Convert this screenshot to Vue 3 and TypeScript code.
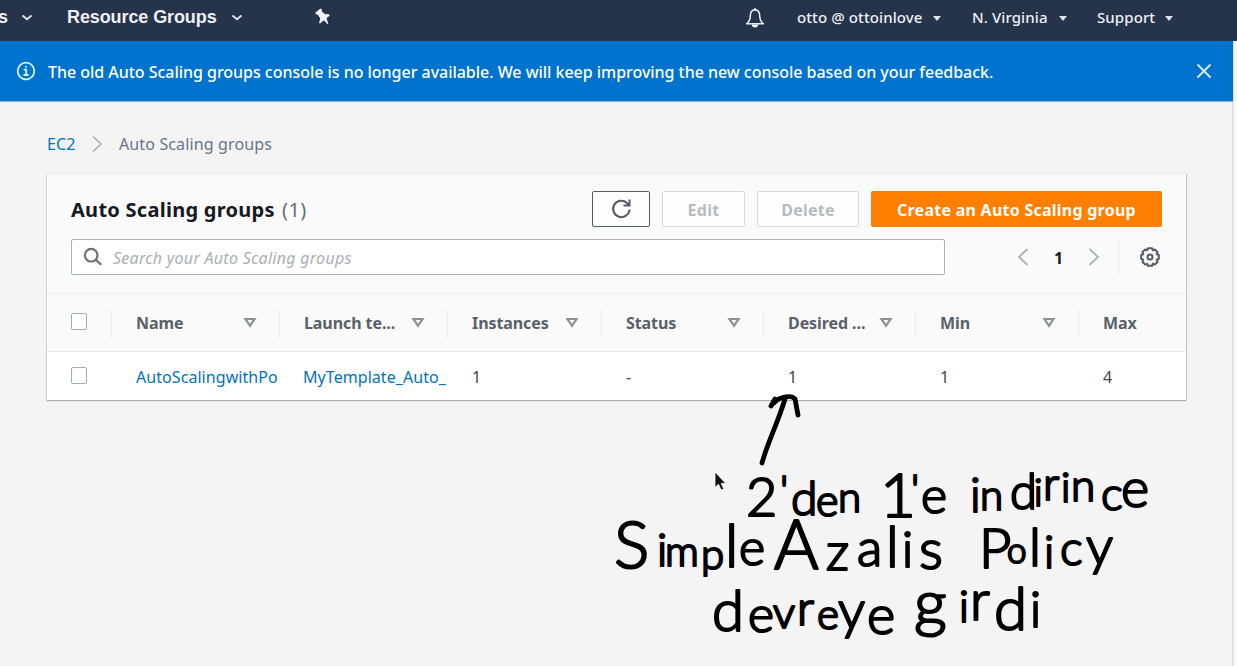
<script setup lang="ts">
interface Column {
  label: string
  value: string
  link?: boolean
  sortable: boolean
}

/** character, left edge, baseline, font size */
type Glyph = [string, number, number, number]

const columns: Column[] = [
  { label: 'Name', value: 'AutoScalingwithPolicy', link: true, sortable: true },
  { label: 'Launch te...', value: 'MyTemplate_Auto_Scaling', link: true, sortable: true },
  { label: 'Instances', value: '1', sortable: true },
  { label: 'Status', value: '-', sortable: true },
  { label: 'Desired ...', value: '1', sortable: true },
  { label: 'Min', value: '1', sortable: true },
  { label: 'Max', value: '4', sortable: false },
]

const words: Glyph[][] = [
  [['2', 746, 516, 54], ["'", 780, 505, 42], ['d', 791, 515, 48], ['e', 816, 516, 43], ['n', 838, 512, 42]],
  [['1', 880, 517, 62], ["'", 911, 504, 42], ['e', 921, 513, 50]],
  [['i', 970, 512, 48], ['n', 980, 510, 42]],
  [['d', 1010, 509, 49], ['i', 1034, 506, 38], ['r', 1043, 500, 46], ['i', 1061, 502, 42], ['n', 1071, 501, 44], ['c', 1101, 510, 46], ['e', 1121, 507, 54]],
  [['S', 614, 568, 66], ['i', 657, 566, 46], ['m', 665, 566, 42], ['p', 701, 569, 42], ['l', 725, 567, 60], ['e', 739, 565, 50]],
  [['A', 774, 569, 68], ['z', 826, 570, 52], ['a', 857, 566, 52], ['l', 886, 567, 58], ['i', 902, 567, 50], ['s', 919, 569, 56]],
  [['P', 979, 568, 56], ['o', 1007, 563, 35], ['l', 1029, 566, 54], ['i', 1044, 568, 46], ['c', 1060, 565, 48], ['y', 1086, 565, 54]],
  [['d', 712, 631, 58], ['e', 748, 632, 50], ['v', 773, 628, 44], ['r', 797, 625, 48], ['e', 817, 629, 42], ['y', 838, 629, 54], ['e', 867, 634, 54]],
  [['g', 914, 625, 64], ['i', 959, 622, 44], ['r', 970, 620, 56], ['d', 994, 630, 60], ['i', 1030, 627, 50]],
]
</script>

<template>
  <div class="page">
    <header class="nav">
      <span class="nav-main nav-cut">s</span>
      <svg class="chev chev-a" width="12" height="8" viewBox="0 0 12 8"><path d="M1.500 1.500 6 5.200l4.500-3.700" /></svg>
      <span class="nav-main groups">Resource Groups</span>
      <svg class="chev chev-b" width="12" height="8" viewBox="0 0 12 8"><path d="M1.500 1.500 6 5.200l4.500-3.700" /></svg>
      <svg class="pin" width="18" height="18" viewBox="0 0 18 18">
        <path d="M1.500 4.500 6.500.5l1.500 1-.2 2 3.400 2.700 3.500-.2 1 1.700-3.200 2.300 1.800 5.700-1 .3-3.400-3.800-3.900 3.300-.9-.8 1.200-4.100L3.600 6.400l-1.800.2z" />
      </svg>
      <span class="spacer"></span>
      <svg class="bell" width="20" height="22" viewBox="0 0 20 22">
        <path d="M10 2.800C7 3 5.300 5.500 5.300 9c0 4-1.300 5.800-3.600 7.700h16.600c-2.300-1.900-3.600-3.700-3.600-7.700 0-3.500-1.700-6-4.700-6.200z" />
        <path class="clapper" d="M6.800 17.500a3.200 3 0 0 0 6.400 0zM9 1.200h2v2H9z" />
      </svg>
      <span class="nav-item account">otto @ ottoinlove</span>
      <i class="caret"></i>
      <span class="nav-item region">N. Virginia</span>
      <i class="caret"></i>
      <span class="nav-item support">Support</span>
      <i class="caret"></i>
    </header>

    <div class="banner">
      <svg width="20" height="20" viewBox="0 0 20 20" class="info">
        <circle cx="10" cy="10" r="8.300" />
        <path d="M7.700 8.700h2.500v5.100M7.500 14h5.200M9 5.700h1.800" />
      </svg>
      <span class="banner-text">The old Auto Scaling groups console is no longer available. We will keep improving the new console based on your feedback.</span>
      <svg class="close" width="16" height="16" viewBox="0 0 16 16"><path d="M1.500 1.500l13 13M14.500 1.500l-13 13" /></svg>
    </div>

    <main>
      <nav class="crumbs">
        <a>EC2</a>
        <svg width="12" height="18" viewBox="0 0 12 18"><path d="M2 1.500 10 9l-8 7.500" /></svg>
        <span>Auto Scaling groups</span>
      </nav>

      <section class="card">
        <div class="title-row">
          <h1>Auto Scaling groups</h1>
          <span class="count">(1)</span>
          <span class="spacer"></span>
          <button class="btn refresh">
            <svg width="22" height="22" viewBox="0 0 22 22"><path d="M19.500 11.500a8.200 8.200 0 1 1-2.600-6.600L19 7M19.500 1.500V7.500H13.500" /></svg>
          </button>
          <button class="btn muted edit">Edit</button>
          <button class="btn muted delete">Delete</button>
          <button class="btn create">Create an Auto Scaling group</button>
        </div>

        <div class="filter-row">
          <div class="search">
            <svg width="20" height="20" viewBox="0 0 20 20"><circle cx="8.200" cy="8.200" r="6.300" /><path d="M12.600 12.600l5.600 5.200" /></svg>
            <span>Search your Auto Scaling groups</span>
          </div>
          <div class="pager">
            <svg width="12" height="20" viewBox="0 0 12 20"><path d="M10.500 2 2 10l8.500 8" /></svg>
            <b>1</b>
            <svg width="12" height="20" viewBox="0 0 12 20"><path d="M1.500 2 10 10l-8.500 8" /></svg>
          </div>
          <div class="settings">
            <svg width="22" height="22" viewBox="0 0 22 22">
              <path d="M9 2.200h4l.8 2 2-.8 2.800 2.800-.8 2 2 .8v4l-2 .8.8 2-2.800 2.800-2-.8-.8 2H9l-.8-2-2 .8-2.800-2.800.8-2-2-.8V9l2-.8-.8-2 2.800-2.800 2 .8z" />
              <circle cx="11" cy="11" r="2.500" />
            </svg>
          </div>
        </div>

        <div class="grid head">
          <div class="cell check"><i class="box"></i></div>
          <div v-for="c in columns" :key="c.label" class="cell">
            <span>{{ c.label }}</span>
            <svg v-if="c.sortable" width="14" height="12" viewBox="0 0 14 12"><path d="M2.500 2h9L7 8.800z" /></svg>
          </div>
        </div>
        <div class="grid row">
          <div class="cell check"><i class="box"></i></div>
          <div v-for="c in columns" :key="c.label" class="cell" :class="{ link: c.link }">
            <span>{{ c.value }}</span>
          </div>
        </div>
      </section>
    </main>

    <svg class="ink" width="1237" height="666" viewBox="0 0 1237 666">
      <path class="arrow" d="M762 463C767 444 777 425 785 399M771 406l4-7M774 403C780 396 792 395 795 399l3 16" />
      <text v-for="(word, i) in words" :key="i"><tspan
        v-for="([char, x, y, size], j) in word"
        :key="j"
        :x="x"
        :y="y"
        :font-size="size"
      >{{ char }}</tspan></text>
      <path class="cursor" d="M715 472v15.500l3.500-3.200 2.600 5.800 2.700-1.200-2.500-5.500h4.500z" />
    </svg>
  </div>
</template>

<style>
body {
  margin: 0;
  overflow: hidden;
}
</style>

<style scoped>
.page {
  position: relative;
  box-sizing: border-box;
  width: 1237px;
  height: 666px;
  overflow: hidden;
  background: linear-gradient(90deg, #f4f4f5 1232px, #e2e3e5 1232px, #e2e3e5 1234px, #fafafa 1234px);
  font-family: 'Noto Sans', 'Open Sans', sans-serif;
  font-size: 16px;
  color: #444;
}
svg {
  fill: none;
  flex: none;
}
.spacer {
  flex: 1;
}
.nav {
  display: flex;
  align-items: center;
  height: 41px;
  padding: 0 64px 7px 0;
  box-sizing: border-box;
  background: #25334b;
  color: #edf0f5;
  white-space: nowrap;
}
.nav-main {
  font: bold 18px/22px 'Liberation Sans', sans-serif;
  letter-spacing: -0.100px;
}
.nav-cut {
  width: 8px;
  margin-left: -2px;
}
.chev {
  margin-top: 2px;
}
.chev path {
  stroke: #dfe3ea;
  stroke-width: 2;
}
.chev-a {
  margin-left: 15px;
}
.groups {
  margin-left: 34px;
  width: 150px;
}
.chev-b {
  margin-left: 14px;
}
.pin {
  margin-left: 71px;
}
.pin path {
  fill: #f1f3f7;
}
.bell {
  margin: 2px 32px 0 0;
}
.bell path {
  stroke: #edf0f5;
  stroke-width: 1.500;
  stroke-linejoin: round;
}
.bell .clapper {
  fill: #edf0f5;
  stroke: none;
}
.nav-item {
  font-size: 15px;
  font-weight: 500;
  letter-spacing: 0.100px;
}
.account {
  width: 127px;
}
.region {
  margin-left: 31px;
  width: 78px;
}
.support {
  margin-left: 30px;
  width: 59px;
}
.caret {
  margin: 2px 0 0 9px;
  border: 4.500px solid transparent;
  border-top: 5px solid #dfe3ea;
  border-bottom: 0;
}
.banner {
  display: flex;
  align-items: center;
  width: 1233px;
  height: 60px;
  padding: 0 21px 0 16px;
  box-sizing: border-box;
  background: #0073ce;
  color: #fff;
  box-shadow: 0 1px 1px #a5b4c8;
}
.info {
  stroke: #d6f1ff;
  stroke-width: 1.800;
}
.banner-text {
  flex: 1;
  margin: 2px 0 0 12px;
  font-weight: 500;
  white-space: nowrap;
  letter-spacing: -0.030px;
}
.close {
  stroke: #d6f1ff;
  stroke-width: 1.800;
}
main {
  padding: 31px 0 0 47px;
}
.crumbs {
  display: flex;
  align-items: center;
  height: 24px;
  color: #687588;
  letter-spacing: 0.130px;
}
.crumbs a {
  width: 29px;
  color: #0073bb;
}
.crumbs svg {
  margin: 0 16px 0 15px;
  stroke: #aab2b8;
  stroke-width: 1.700;
}
.card {
  display: flex;
  flex-direction: column;
  width: 1139px;
  height: 226px;
  margin-top: 18px;
  background: #fafafb;
  box-shadow: 0 1px 1px #aaaeb0, 1px 0 1px #c9cccf, -1px 0 1px #dcdee0;
}
.title-row {
  display: flex;
  align-items: center;
  padding: 17px 24px 0;
}
h1 {
  margin: 1px 0 0;
  width: 204px;
  font-size: 20px;
  line-height: 24px;
  font-weight: 700;
  letter-spacing: 0.270px;
  color: #16191f;
  white-space: nowrap;
}
.count {
  margin: 1px 0 0 7px;
  font-size: 20px;
  line-height: 24px;
  letter-spacing: 0.400px;
  color: #687078;
}
.btn {
  display: flex;
  align-items: center;
  justify-content: center;
  box-sizing: border-box;
  height: 36px;
  margin: 0 0 0 12px;
  padding: 2px 0 0;
  border: 1px solid #d5dbdb;
  border-radius: 2px;
  background: #fefefe;
  font: 700 16px 'Noto Sans', sans-serif;
  letter-spacing: 0.250px;
  white-space: nowrap;
}
.refresh {
  padding: 0;
  width: 58px;
  border-color: #545b64;
}
.refresh svg {
  stroke: #545b64;
  stroke-width: 2;
}
.muted {
  color: #b5bcc0;
}
.edit {
  width: 83px;
}
.delete {
  width: 102px;
}
.create {
  width: 291px;
  border-color: #f77f0a;
  background: #ff8000;
  color: #fff;
}
.filter-row {
  display: flex;
  align-items: center;
  margin: 12px 24px 0;
  height: 36px;
}
.search {
  display: flex;
  align-items: center;
  box-sizing: border-box;
  width: 874px;
  height: 36px;
  padding-left: 11px;
  border: 1px solid #aab7b8;
  border-radius: 2px;
  background: #fff;
  font-style: italic;
  letter-spacing: 0.280px;
  color: #aaafb3;
}
.search svg {
  stroke: #687078;
  stroke-width: 2.200;
}
.search span {
  margin: 2px 0 0 10px;
}
.pager {
  display: flex;
  align-items: center;
  justify-content: space-between;
  width: 83px;
  margin-left: 72px;
  color: #16191f;
}
.pager b {
  margin-top: 2px;
}
.pager svg {
  stroke: #aab2b8;
  stroke-width: 1.800;
}
.settings {
  display: flex;
  align-items: center;
  height: 36px;
  margin-left: 18px;
  padding-left: 20px;
  border-left: 1px solid #eaeded;
}
.settings svg {
  stroke: #545b64;
  stroke-width: 2;
  stroke-linejoin: round;
}
.grid {
  display: grid;
  grid-template-columns: 65px 168px 168px 154px 162px 152px 163px 107px;
  box-sizing: border-box;
}
.head {
  align-items: center;
  height: 59px;
  margin-top: 18px;
  border-top: 1px solid #eeefef;
  border-bottom: 1px solid #e6e8e8;
  font-weight: 700;
  letter-spacing: -0.080px;
  color: #596068;
}
.cell {
  display: flex;
  align-items: center;
  box-sizing: border-box;
  min-width: 0;
  padding-left: 24px;
  white-space: nowrap;
}
.head .cell {
  height: 28px;
  justify-content: space-between;
  padding-right: 22px;
  border-right: 1px solid #eaeded;
}
.head span {
  margin-top: 1px;
}
.head .check {
  padding-right: 0;
}
.head .cell:last-child {
  border: 0;
}
.head svg {
  stroke: #8a9094;
  stroke-width: 2.200;
}
.row {
  flex: 1;
  background: #fff;
}
.row span {
  min-width: 0;
  margin-top: 2px;
  overflow: hidden;
}
.row .link {
  padding-right: 1px;
  color: #0073bb;
  letter-spacing: 0.060px;
}
.row .cell:nth-child(3) {
  padding-left: 23px;
}
.box {
  box-sizing: border-box;
  width: 16px;
  height: 17px;
  margin-top: -2px;
  border: 1px solid #a4adae;
  border-radius: 2px;
  background: #fff;
}
.ink {
  position: absolute;
  inset: 0;
  pointer-events: none;
}
.ink text {
  font-family: Lato, 'Open Sans', sans-serif;
  font-weight: 300;
  fill: #000;
  stroke: #000;
  stroke-width: 2.200;
  stroke-linecap: round;
  stroke-linejoin: round;
}
.arrow {
  stroke: #000;
  stroke-width: 4.800;
  stroke-linecap: round;
  stroke-linejoin: round;
}
.cursor {
  fill: #111;
  stroke: #fff;
  stroke-width: 0.800;
}
</style>
